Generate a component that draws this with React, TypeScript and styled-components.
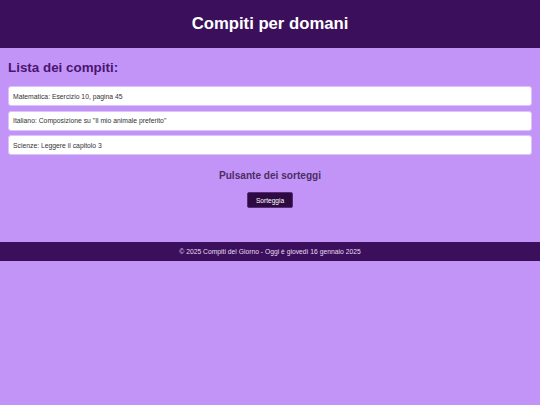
import React from "react";
import styled, { createGlobalStyle } from "styled-components";

const Global = createGlobalStyle`
  html, body { margin: 0; padding: 0; }
  body { background: #c394f7; font-family: "Liberation Sans", Arial, sans-serif; }
`;

const Header = styled.header`
  background: #3b0f5b;
  height: 48px;
  display: flex;
  align-items: center;
  justify-content: center;
`;

const Title = styled.h1`
  margin: 0;
  color: #ffffff;
  font-size: 16.7px;
  font-weight: bold;
  line-height: 20px;
`;

const Main = styled.main`
  padding: 10px 8px 0;
  display: flex;
  flex-direction: column;
`;

const SectionTitle = styled.h2`
  margin: 0 0 8px;
  color: #4a1670;
  font-size: 13.4px;
  font-weight: bold;
  line-height: 20px;
`;

const List = styled.ul`
  list-style: none;
  margin: 0;
  padding: 0;
  display: flex;
  flex-direction: column;
  gap: 4.5px;
`;

const Item = styled.li`
  box-sizing: border-box;
  background: #ffffff;
  border: 1px solid #dcc4f8;
  border-radius: 3px;
  height: 20px;
  display: flex;
  align-items: center;
  padding: 0 4px;
  font-size: 6.8px;
  color: #333333;
`;

const DrawSection = styled.section`
  margin-top: 14px;
  display: flex;
  flex-direction: column;
  align-items: center;
`;

const DrawTitle = styled.h3`
  margin: 0 0 9px;
  color: #4b2d66;
  font-size: 10.1px;
  font-weight: bold;
  line-height: 14px;
`;

const Button = styled.button`
  box-sizing: border-box;
  background: #2d0a42;
  color: #ffffff;
  border: 1px solid #5a2a7a;
  border-radius: 2px;
  width: 46px;
  height: 16px;
  padding: 0;
  font-family: inherit;
  font-size: 6.6px;
  cursor: pointer;
`;

const Footer = styled.footer`
  margin-top: 34px;
  background: #3b0f5b;
  height: 19px;
  display: flex;
  align-items: center;
  justify-content: center;
  color: #e8dcf4;
  font-size: 6.75px;
`;

const tasks = [
  "Matematica: Esercizio 10, pagina 45",
  "Italiano: Composizione su \"Il mio animale preferito\"",
  "Scienze: Leggere il capitolo 3",
];

export default function App() {
  return (
    <>
      <Global />
      <Header>
        <Title>Compiti per domani</Title>
      </Header>
      <Main>
        <SectionTitle>Lista dei compiti:</SectionTitle>
        <List>
          {tasks.map((t) => (
            <Item key={t}>{t}</Item>
          ))}
        </List>
        <DrawSection>
          <DrawTitle>Pulsante dei sorteggi</DrawTitle>
          <Button>Sorteggia</Button>
        </DrawSection>
      </Main>
      <Footer>© 2025 Compiti del Giorno - Oggi è giovedì 16 gennaio 2025</Footer>
    </>
  );
}
